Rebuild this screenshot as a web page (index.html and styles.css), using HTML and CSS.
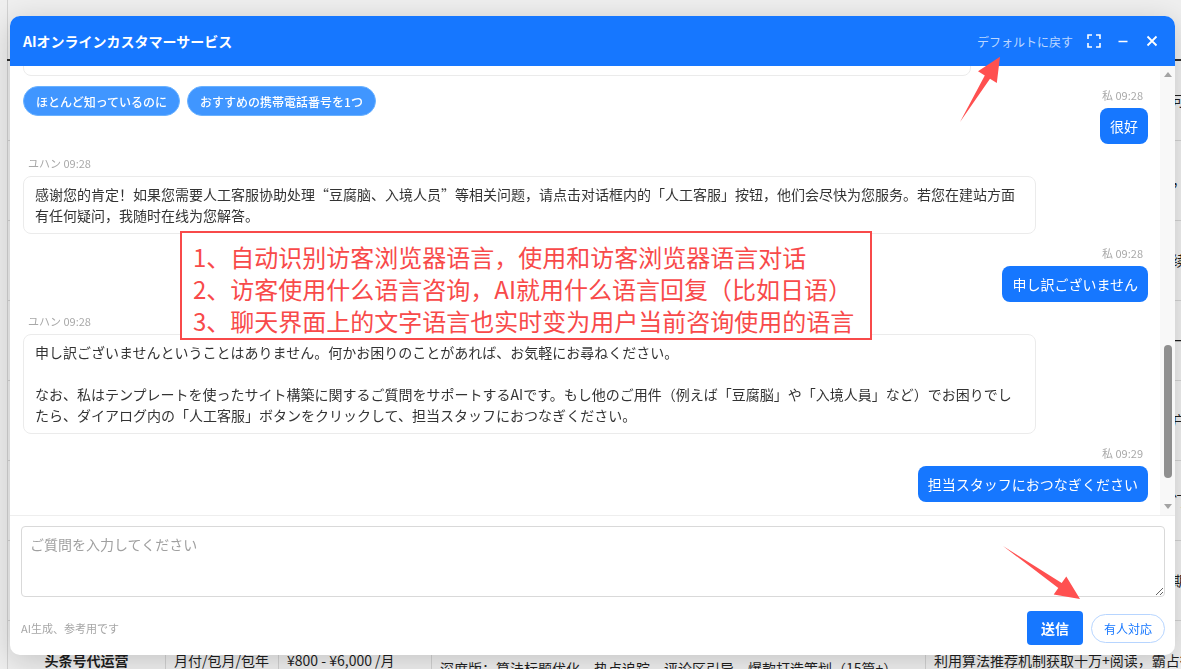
FILE: index.html
```html
<!DOCTYPE html>
<html lang="zh-CN">
<head>
    <meta charset="utf-8">
    <title>AIオンラインカスタマーサービス</title>
    <link rel="stylesheet" href="styles.css">
</head>
<body>
    <!-- page behind the chat window -->
    <table class="price-table">
        <colgroup>
            <col class="c1"><col class="c2"><col class="c3"><col class="c4"><col class="c5">
        </colgroup>
        <thead>
            <tr><th>服务项目</th><th>计费方式</th><th>价格区间</th><th>服务内容</th><th>核心优势</th></tr>
        </thead>
        <tbody>
            <tr><td class="name">企业官网建设</td><td>一次性</td><td>¥2,000 - ¥20,000</td><td>响应式模板、定制设计、基础SEO设置</td><td>适配电脑与手机，展示企业形象，后台可自主编辑更新内容</td></tr>
            <tr><td class="name">小程序开发</td><td>一次性</td><td>¥3,000 - ¥30,000</td><td>商城、预约、会员、点餐等功能模块</td><td>打通微信生态，用户无需下载即可使用，转化率高</td></tr>
            <tr><td class="name">SEO优化</td><td>月付/包年</td><td>¥1,000 - ¥8,000 /月</td><td>关键词布局、内容优化、外链建设</td><td>提升搜索排名，获取精准流量，带来持续稳定的询盘收益</td></tr>
            <tr><td class="name">竞价托管</td><td>月付</td><td>¥1,500 - ¥5,000 /月</td><td>账户搭建、出价调整、数据分析</td><td>降低获客成本，提升投放回报率，专人一对一收效更明显</td></tr>
            <tr><td class="name">公众号代运营</td><td>月付/包年</td><td>¥1,200 - ¥6,000 /月</td><td>选题策划、图文排版、粉丝互动</td><td>塑造品牌形象，沉淀私域流量，增强客户粘性和影响力度</td></tr>
            <tr><td class="name">短视频代运营</td><td>月付/包年</td><td>¥3,000 - ¥15,000 /月</td><td>脚本策划、拍摄剪辑、账号矩阵</td><td>抓住短视频流量红利，快速曝光，助力门店引流与带货并进</td></tr>
            <tr><td class="name">百家号代运营</td><td>月付/包月</td><td>¥600 - ¥4,000 /月</td><td>原创文章撰写、定时发布、数据复盘</td><td>借助百度搜索权重，文章快速收录，长期获取稳定流量石</td></tr>
            <tr><td class="name">头条号代运营</td><td>月付/包月/包年</td><td>¥800 - ¥6,000 /月</td><td class="lower">深度版：算法标题优化、热点追踪、评论区引导、爆款打造策划（15篇+）</td><td>利用算法推荐机制获取十万+阅读，霸占行业流量入口</td></tr>
        </tbody>
    </table>

    <div class="chat-dialog">
        <div class="chat-header">
            <span class="chat-title">AIオンラインカスタマーサービス</span>
            <div class="header-actions">
                <span class="reset-link">デフォルトに戻す</span>
                <span class="icon-btn">
                    <svg width="16" height="16" viewBox="0 0 16 16" fill="none" stroke="#fff" stroke-width="1.6">
                        <path d="M2 6V2h4M10 2h4v4M14 10v4h-4M6 14H2v-4"/>
                    </svg>
                </span>
                <span class="icon-btn">
                    <svg width="16" height="16" viewBox="0 0 16 16" fill="none" stroke="#fff" stroke-width="1.6">
                        <path d="M3.5 8.5h9"/>
                    </svg>
                </span>
                <span class="icon-btn">
                    <svg width="16" height="16" viewBox="0 0 16 16" fill="none" stroke="#fff" stroke-width="1.8">
                        <path d="M3.5 3.5l9 9M12.5 3.5l-9 9"/>
                    </svg>
                </span>
            </div>
        </div>

        <div class="chat-body">
            <div class="msg-list">
                <div class="msg-group">
                    <div class="bubble">您好！我是本站的智能客服助手，可以为您解答模板建站、域名绑定、网站备案和搜索优化等方面的问题，请问您今天在使用中有什么可以帮您的吗？</div>
                    <div class="suggest-row">
                        <div class="chips">
                            <span class="chip">ほとんど知っているのに</span>
                            <span class="chip">おすすめの携帯電話番号を1つ</span>
                        </div>
                        <div class="msg msg-me">
                            <div class="meta">私 09:28</div>
                            <div class="bubble-me">很好</div>
                        </div>
                    </div>
                </div>

                <div class="msg msg-ai">
                    <div class="meta">ユハン 09:28</div>
                    <div class="bubble">感谢您的肯定！如果您需要人工客服协助处理“豆腐脑、入境人员”等相关问题，请点击对话框内的「人工客服」按钮，他们会尽快为您服务。若您在建站方面有任何疑问，我随时在线为您解答。</div>
                </div>

                <div class="msg msg-me">
                    <div class="meta">私 09:28</div>
                    <div class="bubble-me">申し訳ございません</div>
                </div>

                <div class="msg msg-ai">
                    <div class="meta">ユハン 09:28</div>
                    <div class="bubble">
                        <p>申し訳ございませんということはありません。何かお困りのことがあれば、お気軽にお尋ねください。</p>
                        <p>なお、私はテンプレートを使ったサイト構築に関するご質問をサポートするAIです。もし他のご用件（例えば「豆腐脳」や「入境人員」など）でお困りでしたら、ダイアログ内の「人工客服」ボタンをクリックして、担当スタッフにおつなぎください。</p>
                    </div>
                </div>

                <div class="msg msg-me">
                    <div class="meta">私 09:29</div>
                    <div class="bubble-me">担当スタッフにおつなぎください</div>
                </div>
            </div>

            <div class="scrollbar">
                <div class="sb-arrow up"></div>
                <div class="sb-track"><div class="sb-thumb"></div></div>
                <div class="sb-arrow down"></div>
            </div>
        </div>

        <div class="chat-input">
            <textarea placeholder="ご質問を入力してください"></textarea>
            <div class="input-footer">
                <span class="ai-note">AI生成、参考用です</span>
                <div class="footer-btns">
                    <button class="btn-send">送信</button>
                    <button class="btn-human">有人対応</button>
                </div>
            </div>
        </div>
    </div>

    <!-- annotation laid over the screenshot -->
    <div class="note-box">
        <div>1、自动识别访客浏览器语言，使用和访客浏览器语言对话</div>
        <div>2、访客使用什么语言咨询，AI就用什么语言回复（比如日语）</div>
        <div>3、聊天界面上的文字语言也实时变为用户当前咨询使用的语言</div>
    </div>

    <svg class="arrows" width="1181" height="669" viewBox="0 0 1181 669">
        <polygon points="960,122 990,78.7 996.8,82.9 1000,56.7 978,71.3 984.8,75.5" fill="#ff5050"/>
        <polygon points="1003,546 1058.3,588 1053.7,594.5 1080,599 1066.3,576.5 1061.7,583" fill="#ff5050"/>
    </svg>
</body>
</html>
```

FILE: styles.css
```css
* {
    box-sizing: border-box;
}

body {
    margin: 0;
    width: 1181px;
    height: 669px;
    overflow: hidden;
    background-color: #efefef;
    font-family: "Noto Sans CJK SC", "Noto Sans CJK JP", sans-serif;
    color: #333;
}

/* background page */
.price-table {
    margin-left: 7px;
    width: 1174px;
    table-layout: fixed;
    border-collapse: collapse;
    color: #1f1f1f;
    font-size: 14px;
    border-left: 1px solid #d2d2d2;
}

.price-table .c1 { width: 158px; }
.price-table .c2 { width: 113px; }
.price-table .c3 { width: 153px; }
.price-table .c4 { width: 494px; }

.price-table th {
    height: 60px;
    border-bottom: 2px solid #2b2b2b;
    font-weight: 700;
}

.price-table td {
    height: 80px;
    padding: 0 8px;
    border-bottom: 1px solid #d2d2d2;
    border-left: 1px solid #d2d2d2;
    white-space: nowrap;
    overflow: hidden;
}

.price-table td.name {
    text-align: center;
    font-weight: 700;
}

.price-table td.lower {
    padding-top: 16px;
}

/* chat window */
.chat-dialog {
    position: fixed;
    left: 10px;
    top: 16px;
    z-index: 2;
    width: 1165px;
    height: 639px;
    background-color: #fff;
    border-radius: 10px;
    box-shadow: 0 6px 30px rgba(0, 0, 0, 0.18);
    display: flex;
    flex-direction: column;
    overflow: hidden;
}

.chat-header {
    height: 50px;
    flex-shrink: 0;
    background-color: #1677ff;
    color: #fff;
    display: flex;
    align-items: center;
    justify-content: space-between;
    padding: 0 15px 0 13px;
}

.chat-title {
    font-size: 14px;
    font-weight: 700;
}

.header-actions {
    display: flex;
    align-items: center;
    gap: 13px;
}

.reset-link {
    font-size: 12px;
    color: rgba(255, 255, 255, 0.72);
}

.icon-btn {
    width: 16px;
    height: 16px;
    display: flex;
}

.chat-body {
    flex: 1;
    min-height: 0;
    display: flex;
}

.msg-list {
    flex: 1;
    overflow: hidden;
    display: flex;
    flex-direction: column;
    justify-content: flex-end;
    gap: 12px;
    padding: 0 12px 13px 13px;
}

.msg {
    display: flex;
    flex-direction: column;
    gap: 6px;
}

.msg-ai {
    align-items: flex-start;
}

.msg-me {
    align-items: flex-end;
}

.meta {
    font-size: 11px;
    line-height: 14px;
    color: #a8a8a8;
    padding: 0 5px;
}

.bubble {
    max-width: 90%;
    padding: 7px 11px;
    border: 1px solid #ebebeb;
    border-radius: 8px;
    background-color: #fff;
    font-size: 14px;
    line-height: 21px;
    color: #333;
}

.bubble p {
    margin: 0;
}

.bubble p + p {
    margin-top: 21px;
}

.bubble-me {
    padding: 8px 10px;
    border-radius: 8px;
    background-color: #1677ff;
    color: #fff;
    font-size: 14px;
    line-height: 20px;
}

.msg-group {
    display: flex;
    flex-direction: column;
    align-items: flex-start;
    gap: 10px;
}

.suggest-row {
    align-self: stretch;
    display: flex;
    justify-content: space-between;
    align-items: flex-start;
}

.suggest-row .msg-me {
    margin-top: 2px;
}

.chips {
    display: flex;
    gap: 7px;
}

.chip {
    height: 30px;
    padding: 0 12px;
    border: 1px solid #69b1ff;
    border-radius: 15px;
    background-color: #4096ff;
    color: #fff;
    font-size: 12px;
    font-weight: 500;
    display: flex;
    align-items: center;
}

/* scrollbar of the message list */
.scrollbar {
    width: 15px;
    flex-shrink: 0;
    background-color: #f8f8f8;
    display: flex;
    flex-direction: column;
    align-items: center;
}

.sb-arrow {
    height: 17px;
    display: flex;
    align-items: center;
    justify-content: center;
}

.sb-arrow::before {
    content: "";
    border-left: 4px solid transparent;
    border-right: 4px solid transparent;
    border-bottom: 5px solid #a3a3a3;
}

.sb-arrow.down::before {
    border-bottom: 0;
    border-top: 5px solid #a3a3a3;
}

.sb-track {
    flex: 1;
    padding-top: 262px;
}

.sb-thumb {
    width: 8px;
    height: 133px;
    border-radius: 4px;
    background-color: #8f8f8f;
}

/* input area */
.chat-input {
    flex-shrink: 0;
    border-top: 1px solid #eee;
    padding: 10px 10px 10px 11px;
    display: flex;
    flex-direction: column;
    gap: 14px;
}

.chat-input textarea {
    display: block;
    width: 100%;
    height: 71px;
    padding: 7px 8px;
    border: 1px solid #d9d9d9;
    border-radius: 4px;
    font-family: "Noto Sans CJK SC", "Noto Sans CJK JP", sans-serif;
    font-size: 14px;
    line-height: 21px;
    color: #333;
    outline: none;
}

.chat-input textarea::placeholder {
    color: #a0a0a0;
}

.input-footer {
    height: 34px;
    display: flex;
    justify-content: space-between;
    align-items: center;
}

.ai-note {
    font-size: 11px;
    color: #a6a6a6;
}

.footer-btns {
    display: flex;
    align-items: center;
    gap: 8px;
}

.btn-send {
    width: 56px;
    height: 34px;
    border: none;
    border-radius: 4px;
    background-color: #1677ff;
    color: #fff;
    font-family: inherit;
    font-size: 14px;
    font-weight: 700;
}

.btn-human {
    height: 29px;
    padding: 0 12px;
    border: 1px solid #b7d5ff;
    border-radius: 15px;
    background-color: #fff;
    color: #1677ff;
    font-family: inherit;
    font-size: 12px;
}

/* annotation */
.note-box {
    position: absolute;
    left: 180px;
    top: 231px;
    z-index: 3;
    width: 692px;
    height: 109px;
    padding: 8px 0 0 11px;
    border: 2px solid #f84a4a;
    background-color: #fff;
    color: #f84a4a;
    font-size: 24px;
    line-height: 32px;
    white-space: nowrap;
}

.arrows {
    position: absolute;
    left: 0;
    top: 0;
    z-index: 4;
    pointer-events: none;
}
```
